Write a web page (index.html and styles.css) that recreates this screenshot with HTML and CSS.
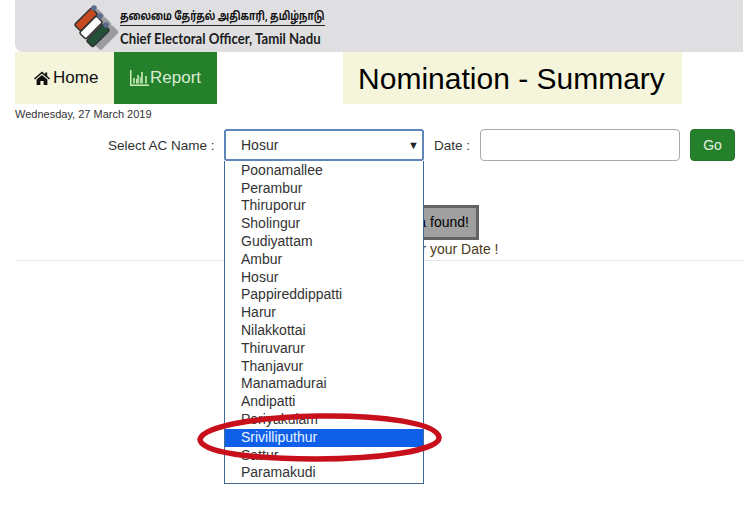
FILE: index.html
```html
<!DOCTYPE html>
<html lang="en">
<head>
    <meta charset="UTF-8">
    <meta name="viewport" content="width=device-width, initial-scale=1.0">
    <title>Nomination - Summary</title>
    <link rel="stylesheet" href="styles.css">
</head>
<body>
    <header class="banner">
        <svg class="logo" width="50" height="52" viewBox="70 0 50 52">
            <g transform="translate(2 2)" fill="#9a9aa0">
                <rect x="77" y="14" width="26" height="11" rx="2" transform="rotate(-45 90 19.5)"/>
                <rect x="84" y="22" width="26" height="11" rx="2" transform="rotate(-45 97 27.5)"/>
                <rect x="91" y="30" width="26" height="11" rx="2" transform="rotate(-45 104 35.5)"/>
            </g>
            <rect x="74" y="15" width="24" height="9" rx="2" fill="#c8491f" stroke="#333" stroke-width="1.5" transform="rotate(-45 86 19.5)"/>
            <rect x="79" y="23" width="24" height="9" rx="2" fill="#fff" stroke="#333" stroke-width="1.5" transform="rotate(-45 91 27.5)"/>
            <rect x="86" y="31" width="24" height="9" rx="2" fill="#24503a" stroke="#333" stroke-width="1.5" transform="rotate(-45 98 35.5)"/>
            <circle cx="94" cy="8" r="2.8" fill="#5c6a8c"/>
            <circle cx="100" cy="16" r="2.8" fill="#5c6a8c"/>
            <circle cx="106" cy="25" r="2.8" fill="#5c6a8c"/>
        </svg>
        <div class="banner-text">
            <div class="banner-tamil"><span>தலைமை தேர்தல் அதிகாரி, தமிழ்நாடு</span></div>
            <div class="banner-english">Chief Electoral Officer, Tamil Nadu</div>
        </div>
    </header>

    <nav class="topnav">
        <a class="nav-home">
            <svg width="16" height="14" viewBox="0 0 16 14"><path d="M8 0.6 L11.2 3.3 V1.4 H13.2 V5 L16 7.4 L15 8.5 L8 2.6 L1 8.5 L0 7.4 Z M2.6 8.6 L8 4 L13.4 8.6 V14 H9.6 V10 H6.4 V14 H2.6 Z" fill="#111"/></svg>
            Home
        </a>
        <a class="nav-report">
            <svg width="19" height="16" viewBox="0 0 19 16"><path d="M0.7 0 V15.2 H19 M4 8 V13.5 M8 5 V13.5 M12 2 V13.5 M16 6 V13.5" fill="none" stroke="#c9ecb8" stroke-width="1.6"/><path d="M6.5 9 V13.5 M10.3 7 V13.5" fill="none" stroke="#c9ecb8" stroke-width="1"/></svg>Report
        </a>
        <h1 class="page-title">Nomination - Summary</h1>
    </nav>

    <div class="today">Wednesday, 27 March 2019</div>

    <form class="filter-row">
        <label class="filter-label">Select AC Name :</label>
        <div class="ac-select">
            <div class="ac-current">Hosur<span class="ac-arrow">▼</span></div>
            <ul class="ac-list">
                <li>Poonamallee</li>
                <li>Perambur</li>
                <li>Thiruporur</li>
                <li>Sholingur</li>
                <li>Gudiyattam</li>
                <li>Ambur</li>
                <li>Hosur</li>
                <li>Pappireddippatti</li>
                <li>Harur</li>
                <li>Nilakkottai</li>
                <li>Thiruvarur</li>
                <li>Thanjavur</li>
                <li>Manamadurai</li>
                <li>Andipatti</li>
                <li>Periyakulam</li>
                <li class="selected">Srivilliputhur</li>
                <li>Sattur</li>
                <li>Paramakudi</li>
            </ul>
            <svg class="red-circle" width="250" height="52" viewBox="0 0 250 52">
                <path d="M4 27 C8 14 62 5 122 4 C186 3 240 11 243 25 C245 39 180 47 120 47 C60 47 3 41 4 27 Z" fill="none" stroke="#c8101c" stroke-width="5.5"/>
            </svg>
        </div>
        <label class="filter-label date-label">Date :</label>
        <input class="date-input" type="text">
        <button class="btn-go" type="button">Go</button>
    </form>

    <div class="notice">
        <div class="notice-box">No data found!</div>
        <p class="notice-text">Please enter your Date !</p>
    </div>

    <hr class="divider">
</body>
</html>
```

FILE: styles.css
```css
* {
    margin: 0;
    padding: 0;
    box-sizing: border-box;
}

body {
    font-family: 'Liberation Sans', Arial, sans-serif;
    font-size: 14px;
    color: #333;
    background: #fff;
    height: 526px;
    overflow: hidden;
}

.banner {
    margin-left: 15px;
    height: 52px;
    padding-left: 55px;
    display: flex;
    background: #dfdfe1;
    border-bottom-left-radius: 8px;
}

.banner-text {
    width: 205px;
    padding-top: 8px;
}

.banner-tamil {
    height: 18px;
    font-family: 'Noto Sans Tamil', 'Lohit Tamil', sans-serif;
    font-size: 12px;
    line-height: 18px;
    font-weight: 700;
    color: #111;
    white-space: nowrap;
    border-bottom: 1px solid #222;
}

.banner-tamil span {
    display: inline-block;
    transform: scaleX(0.78);
    transform-origin: left center;
}

.banner-english {
    margin-top: 2px;
    font-family: 'Lato', sans-serif;
    font-size: 15.5px;
    line-height: 20px;
    font-weight: 700;
    color: #1c1c1c;
    white-space: nowrap;
    transform: scaleX(0.85);
    transform-origin: left center;
}

.topnav {
    margin-left: 15px;
    height: 52px;
    display: flex;
}

.topnav a {
    display: flex;
    align-items: center;
    font-size: 17px;
}

.nav-home {
    width: 99px;
    padding-left: 19px;
    gap: 3px;
    background: #f5f5dc;
    color: #111;
}

.nav-report {
    width: 103px;
    padding-left: 16px;
    gap: 1px;
    background: #25802c;
    color: #d9ecd2;
}

.page-title {
    margin-left: 126px;
    width: 339px;
    padding-right: 2px;
    background: #f5f5dc;
    color: #000;
    font-size: 30px;
    font-weight: 400;
    line-height: 53px;
    height: 52px;
    text-align: center;
}

.today {
    margin-left: 15px;
    height: 25px;
    font-size: 11px;
    line-height: 20px;
}

.filter-row {
    padding-left: 108px;
    display: flex;
    align-items: center;
    gap: 10px;
}

.filter-label {
    font-size: 13.5px;
    width: 106px;
    white-space: nowrap;
}

.date-label {
    width: 36px;
}

.ac-select {
    position: relative;
    width: 200px;
}

.ac-current {
    height: 32px;
    padding-left: 15px;
    border: 2px solid #5e86b8;
    border-radius: 3px;
    line-height: 28px;
    position: relative;
}

.ac-arrow {
    position: absolute;
    right: 3px;
    top: 0;
    font-size: 11px;
    color: #222;
}

.ac-list {
    position: absolute;
    left: 0;
    top: 32px;
    width: 200px;
    height: 323px;
    padding-top: 0.8px;
    list-style: none;
    background: #fff;
    border: 1px solid #3f6a92;
    border-top: 0;
    z-index: 2;
}

.ac-list li {
    height: 17.8px;
    padding-left: 16px;
    line-height: 17.8px;
}

.ac-list .selected {
    background: #0f5fe8;
    color: #e8f6ff;
}

.red-circle {
    position: absolute;
    left: -28px;
    top: 283px;
    z-index: 3;
}

.date-input {
    width: 200px;
    height: 32px;
    border: 1px solid #aaa;
    border-radius: 4px;
}

.btn-go {
    width: 45px;
    height: 32px;
    font-family: inherit;
    font-size: 14px;
    color: #e6f2e2;
    background: #25802c;
    border: 1px solid #22752a;
    border-radius: 4px;
}

.notice {
    margin-left: 341px;
    width: 164px;
    margin-top: 44px;
    text-align: center;
}

.notice-box {
    width: 114px;
    height: 35px;
    margin-left: 24px;
    padding-left: 2px;
    border: 3px solid #636363;
    background: #a0a0a0;
    color: #000;
    line-height: 29px;
}

.notice-text {
    line-height: 18px;
    color: #4a3a14;
    white-space: nowrap;
}

.divider {
    margin: 2px 0 0 15px;
    border: 0;
    border-top: 1px solid #e8e8e8;
}
```
